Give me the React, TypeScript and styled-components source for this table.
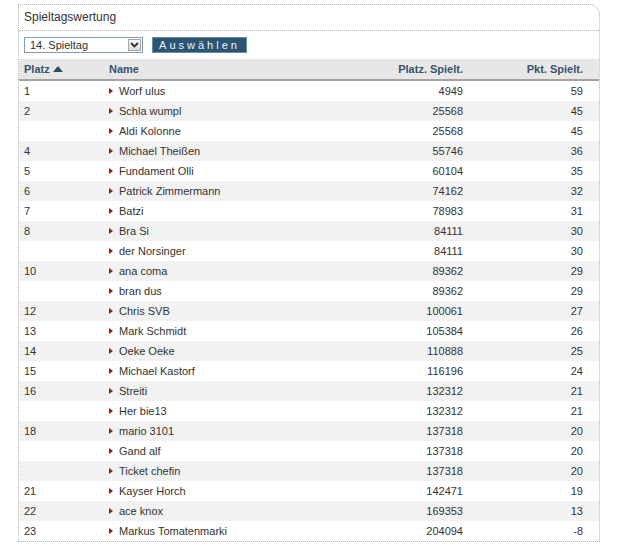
import React from "react";
import styled, { createGlobalStyle } from "styled-components";

const Global = createGlobalStyle`
  html, body { margin: 0; padding: 0; background: #fff; }
  body { font-family: "Liberation Sans", Arial, sans-serif; color: #333; }
`;

const Panel = styled.div`
  margin: 4px 0 0 18px;
  width: 580px;
  border: 1px dotted #b4b4b4;
  border-top-right-radius: 11px;
`;

const Title = styled.div`
  height: 25px;
  line-height: 25px;
  padding: 0 5px;
  font-size: 12px;
  color: #333;
  border-bottom: 1px dotted #b4b4b4;
`;

const Controls = styled.div`
  display: flex;
  align-items: center;
  gap: 9px;
  padding: 6px 5px;
`;

const SelectBox = styled.div`
  box-sizing: border-box;
  width: 119px;
  height: 16px;
  border: 1px solid #7f9db9;
  display: flex;
  align-items: center;
  justify-content: space-between;
  padding: 0 1px 0 5px;
  font-size: 11px;
  color: #333;
  background: #fff;
`;

const SelectArrow = styled.div`
  box-sizing: border-box;
  width: 13px;
  height: 12px;
  border: 1px solid #a5a5a5;
  background: linear-gradient(#fafafa, #dcdcdc);
  display: flex;
  align-items: center;
  justify-content: center;
`;

const Button = styled.div`
  box-sizing: border-box;
  width: 95px;
  height: 16px;
  background: #2b5575;
  border: 1px solid #6b8aa3;
  color: #eef3f7;
  font-size: 11px;
  letter-spacing: 3px;
  line-height: 14px;
  text-align: center;
`;

const cols = "85px 1fr 120px 120px";

const HeadRow = styled.div`
  display: grid;
  grid-template-columns: ${cols};
  padding-right: 11px;
  height: 20px;
  line-height: 20px;
  background: #e7e7e7;
  border-bottom: 2px solid #a3a3a3;
  font-size: 11px;
  font-weight: bold;
  color: #36536d;
`;

const Row = styled.div<{ $alt: boolean }>`
  display: grid;
  grid-template-columns: ${cols};
  padding-right: 11px;
  height: 20px;
  line-height: 20px;
  background: ${(p) => (p.$alt ? "#f2f2f2" : "#fff")};
  font-size: 11px;
  color: #333;
`;

const Cell = styled.div<{ $right?: boolean }>`
  padding: 0 5px;
  text-align: ${(p) => (p.$right ? "right" : "left")};
  white-space: nowrap;
  display: flex;
  align-items: center;
  justify-content: ${(p) => (p.$right ? "flex-end" : "flex-start")};
`;

const SortUp = styled.span`
  display: inline-block;
  width: 0;
  height: 0;
  margin-left: 3px;
  border-left: 5px solid transparent;
  border-right: 5px solid transparent;
  border-bottom: 6px solid #2b4d6b;
`;

const Bullet = styled.span`
  display: inline-block;
  width: 0;
  height: 0;
  margin-right: 6px;
  border-top: 3px solid transparent;
  border-bottom: 3px solid transparent;
  border-left: 4px solid #8e1b15;
`;

const data: [string, string, number, number][] = [
  ["1", "Worf ulus", 4949, 59],
  ["2", "Schla wumpl", 25568, 45],
  ["", "Aldi Kolonne", 25568, 45],
  ["4", "Michael Theißen", 55746, 36],
  ["5", "Fundament Olli", 60104, 35],
  ["6", "Patrick Zimmermann", 74162, 32],
  ["7", "Batzi", 78983, 31],
  ["8", "Bra Si", 84111, 30],
  ["", "der Norsinger", 84111, 30],
  ["10", "ana coma", 89362, 29],
  ["", "bran dus", 89362, 29],
  ["12", "Chris SVB", 100061, 27],
  ["13", "Mark Schmidt", 105384, 26],
  ["14", "Oeke Oeke", 110888, 25],
  ["15", "Michael Kastorf", 116196, 24],
  ["16", "Streiti", 132312, 21],
  ["", "Her bie13", 132312, 21],
  ["18", "mario 3101", 137318, 20],
  ["", "Gand alf", 137318, 20],
  ["", "Ticket chefin", 137318, 20],
  ["21", "Kayser Horch", 142471, 19],
  ["22", "ace knox", 169353, 13],
  ["23", "Markus Tomatenmarki", 204094, -8],
];

export default function App() {
  return (
    <>
      <Global />
      <Panel>
        <Title>Spieltagswertung</Title>
        <Controls>
          <SelectBox>
            <span>14. Spieltag</span>
            <SelectArrow>
              <svg width="9" height="6" viewBox="0 0 9 6">
                <path d="M1 1 L4.5 4.5 L8 1" fill="none" stroke="#333" strokeWidth="1.8" />
              </svg>
            </SelectArrow>
          </SelectBox>
          <Button>Auswählen</Button>
        </Controls>
        <HeadRow>
          <Cell>
            Platz
            <SortUp />
          </Cell>
          <Cell>Name</Cell>
          <Cell $right>Platz. Spielt.</Cell>
          <Cell $right>Pkt. Spielt.</Cell>
        </HeadRow>
        {data.map((r, i) => (
          <Row key={i} $alt={i % 2 === 1}>
            <Cell>{r[0]}</Cell>
            <Cell>
              <Bullet />
              {r[1]}
            </Cell>
            <Cell $right>{r[2]}</Cell>
            <Cell $right>{r[3]}</Cell>
          </Row>
        ))}
      </Panel>
    </>
  );
}
